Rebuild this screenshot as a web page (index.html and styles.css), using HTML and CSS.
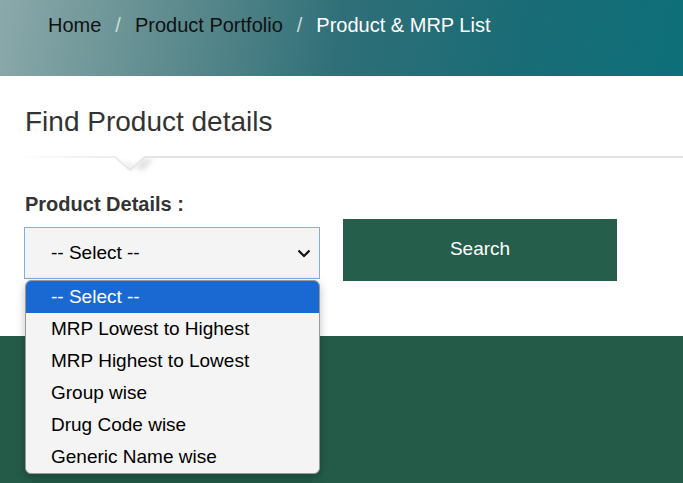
FILE: index.html
```html
<!DOCTYPE html>
<html>
<head>
<meta charset="utf-8">
<link rel="stylesheet" href="styles.css">
</head>
<body>
<header class="banner">
  <nav class="crumbs">
    <span class="crumb">Home</span>
    <span class="sep">/</span>
    <span class="crumb">Product Portfolio</span>
    <span class="sep">/</span>
    <span class="crumb current">Product &amp; MRP List</span>
  </nav>
</header>
<main class="finder">
  <h1 class="title">Find Product details</h1>
  <svg class="divider" width="683" height="26" viewBox="0 0 683 26">
    <defs>
      <linearGradient id="fade" x1="0" x2="1" y1="0" y2="0">
        <stop offset="0" stop-color="#e4e4e4" stop-opacity="0"/>
        <stop offset="0.2" stop-color="#e4e4e4" stop-opacity="1"/>
        <stop offset="1" stop-color="#e4e4e4" stop-opacity="1"/>
      </linearGradient>
      <filter id="blur" x="-50%" y="-50%" width="200%" height="200%">
        <feGaussianBlur stdDeviation="2.5"/>
      </filter>
    </defs>
    <path d="M122 6 L131 16 L144 5 L154 5 L143 17 Z" fill="#d4d4d4" filter="url(#blur)" opacity="0.7"/>
    <rect x="0" y="0" width="683" height="4" fill="#fff"/>
    <polyline points="20,3 115,3 130,16 145,3 683,3" fill="none" stroke="url(#fade)" stroke-width="2"/>
  </svg>
  <label class="field-label">Product Details :</label>
  <div class="form-row">
    <div class="select-wrap">
      <div class="select-box">
        <span>-- Select --</span>
        <svg class="chev" width="14" height="9" viewBox="0 0 14 9"><path d="M1.5 1.5 L7 7 L12.5 1.5" fill="none" stroke="#111" stroke-width="2.2"/></svg>
      </div>
      <ul class="options">
        <li class="opt active">-- Select --</li>
        <li class="opt">MRP Lowest to Highest</li>
        <li class="opt">MRP Highest to Lowest</li>
        <li class="opt">Group wise</li>
        <li class="opt">Drug Code wise</li>
        <li class="opt">Generic Name wise</li>
      </ul>
    </div>
    <button class="search-btn">Search</button>
  </div>
</main>
<footer class="green"></footer>
</body>
</html>
```
FILE: styles.css
```css
* { box-sizing: border-box; }
html, body { margin: 0; padding: 0; }
body {
  font-family: "Liberation Sans", Arial, sans-serif;
  background: #fff;
  width: 683px;
  height: 483px;
  overflow: hidden;
}
.banner {
  height: 76px;
  background: linear-gradient(100deg, #8ba9aa 0%, #5f8c8f 25%, #2f6f78 50%, #1a6c76 75%, #0e707a 100%);
  padding: 13px 0 0 48px;
}
.crumbs {
  display: flex;
  gap: 14px;
  font-size: 20px;
  line-height: 24px;
}
.crumb { color: #111; }
.crumb.current { color: #fff; }
.sep { color: #d0dcdc; }
.finder {
  height: 260px;
  padding-top: 30px;
  position: relative;
}
.title {
  margin: 0 0 0 25px;
  font-weight: normal;
  font-size: 28px;
  line-height: 32px;
  color: #333;
}
.divider {
  display: block;
  margin-top: 16px;
}
.field-label {
  display: block;
  margin: 12px 0 0 25px;
  font-weight: bold;
  font-size: 20px;
  line-height: 24px;
  color: #333;
}
.form-row {
  display: flex;
  align-items: flex-start;
  gap: 23px;
  margin: 0 0 0 24px;
}
.select-wrap {
  position: relative;
  margin-top: 11px;
}
.select-box {
  width: 296px;
  height: 52px;
  border: 1px solid #7cb0e2;
  background: #f4f4f4;
  display: flex;
  align-items: center;
  justify-content: space-between;
  padding: 0 8px 0 26px;
  font-size: 19px;
  color: #000;
}
.chev { margin-top: 1px; }
.options {
  position: absolute;
  left: 1px;
  top: 53px;
  width: 295px;
  margin: 0;
  padding: 0;
  list-style: none;
  background: #f4f4f4;
  border: 1px solid #9a9a9a;
  border-radius: 6px;
  overflow: hidden;
  box-shadow: 0 3px 8px rgba(0,0,0,0.25);
  z-index: 5;
}
.opt {
  height: 32px;
  line-height: 32px;
  padding-left: 25px;
  font-size: 19px;
  color: #000;
}
.opt.active {
  background: #1a69d3;
  color: #fff;
}
.search-btn {
  width: 274px;
  height: 62px;
  margin-top: 3px;
  border: none;
  background: #265e4c;
  color: #fff;
  font-family: "Liberation Sans", Arial, sans-serif;
  font-size: 19px;
  padding: 0 0 2px 0;
}
.green {
  height: 147px;
  background: #245b48;
}
```
